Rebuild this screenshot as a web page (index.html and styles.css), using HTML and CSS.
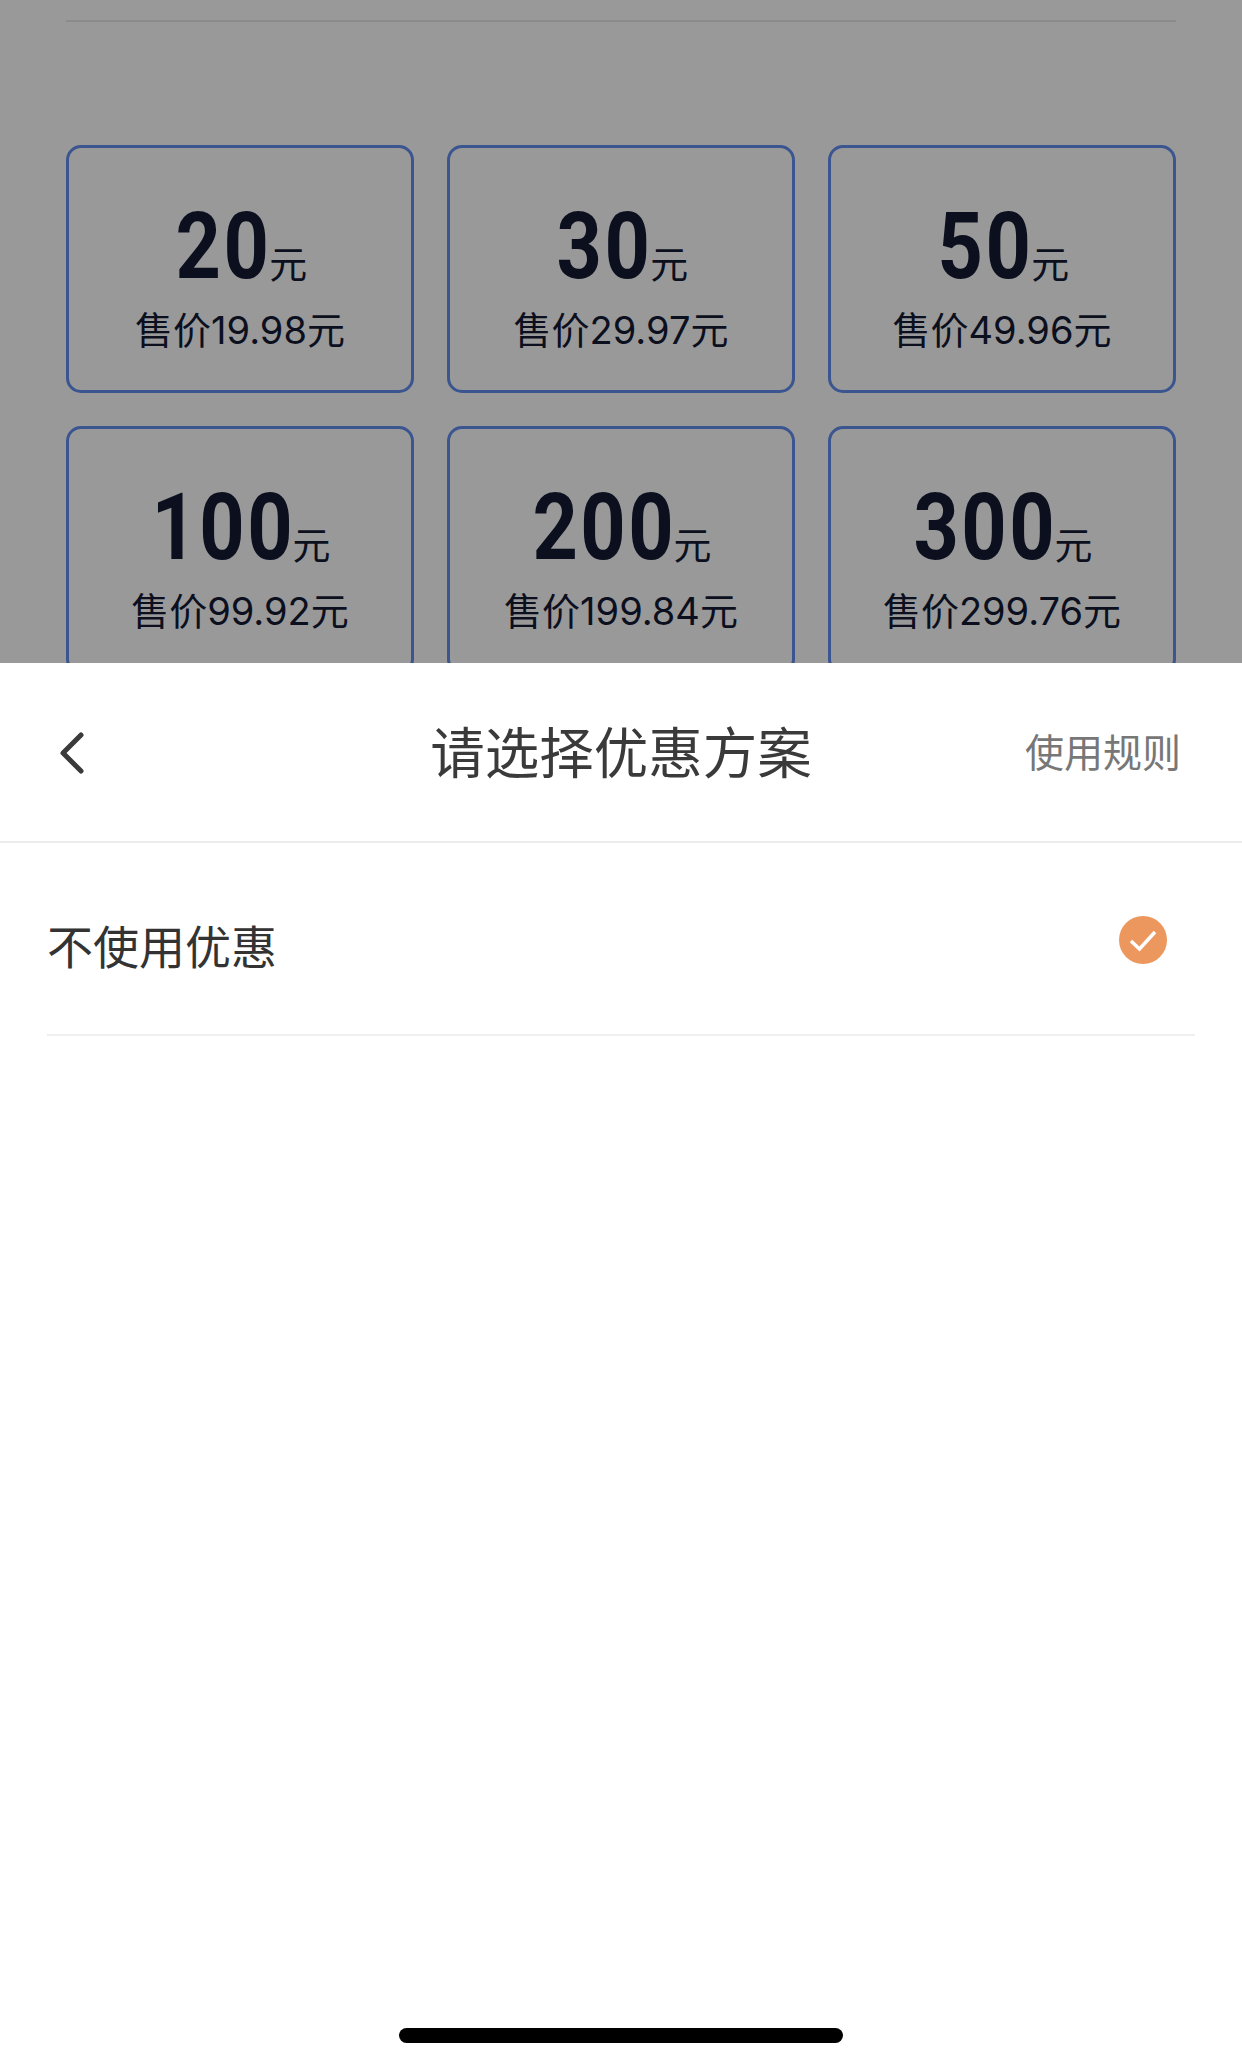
FILE: index.html
```html
<!DOCTYPE html>
<html lang="zh-CN">
<head>
  <meta charset="UTF-8">
  <meta name="viewport" content="width=device-width, initial-scale=1.0">
  <title>请选择优惠方案</title>
  <link rel="stylesheet" href="styles.css">
</head>
<body>
  <div class="dimmed">
    <div class="top-line"></div>
    <div class="card-grid">
      <div class="card">
        <div class="amount">20<span class="unit">元</span></div>
        <div class="price">售价19.98元</div>
      </div>
      <div class="card">
        <div class="amount">30<span class="unit">元</span></div>
        <div class="price">售价29.97元</div>
      </div>
      <div class="card">
        <div class="amount">50<span class="unit">元</span></div>
        <div class="price">售价49.96元</div>
      </div>
      <div class="card">
        <div class="amount">100<span class="unit">元</span></div>
        <div class="price">售价99.92元</div>
      </div>
      <div class="card">
        <div class="amount">200<span class="unit">元</span></div>
        <div class="price">售价199.84元</div>
      </div>
      <div class="card">
        <div class="amount">300<span class="unit">元</span></div>
        <div class="price">售价299.76元</div>
      </div>
    </div>
  </div>

  <div class="sheet">
    <div class="sheet-header">
      <div class="back">
        <svg width="28" height="44" viewBox="0 0 28 44">
          <path d="M24 4 L6 22 L24 40" fill="none" stroke="#3a3a3a" stroke-width="5" stroke-linecap="round" stroke-linejoin="round"/>
        </svg>
      </div>
      <div class="sheet-title">请选择优惠方案</div>
      <div class="rules">使用规则</div>
    </div>

    <div class="option">
      <div class="option-label">不使用优惠</div>
      <div class="option-check">
        <svg width="48" height="48" viewBox="0 0 48 48">
          <circle cx="24" cy="24" r="24" fill="#ec975e"/>
          <path d="M12 25 L20.5 33 L36 16" fill="none" stroke="#fff" stroke-width="3.5"/>
        </svg>
      </div>
    </div>

    <div class="home-bar"></div>
  </div>
</body>
</html>
```

FILE: styles.css
```css
html, body {
  margin: 0;
  padding: 0;
}
body {
  width: 1242px;
  height: 2066px;
  overflow: hidden;
  display: flex;
  flex-direction: column;
  background: #fff;
  font-family: "Inter", "Noto Sans CJK SC", sans-serif;
}
.dimmed {
  height: 663px;
  overflow: hidden;
  padding: 20px 66px 0;
  box-sizing: border-box;
  background: #999;
}
.top-line {
  height: 2px;
  background: #8b8b8b;
}
.card-grid {
  display: grid;
  grid-template-columns: repeat(3, 1fr);
  gap: 33px;
  margin-top: 123px;
}
.card {
  height: 248px;
  box-sizing: border-box;
  border: 3px solid #3a5590;
  border-radius: 15px;
  display: flex;
  flex-direction: column;
  align-items: center;
  color: #0b0f1e;
}
/* digits are squeezed to look like a DIN face, the unit is scaled back */
.amount {
  margin-top: 64px;
  height: 70px;
  line-height: 70px;
  font-family: "Roboto", sans-serif;
  font-weight: 700;
  font-size: 92px;
  letter-spacing: 3px;
  white-space: nowrap;
  transform: scaleX(0.86);
}
.unit {
  display: inline-block;
  font-family: "Noto Sans CJK SC", sans-serif;
  font-weight: 400;
  font-size: 38px;
  line-height: 38px;
  letter-spacing: 0;
  transform: scaleX(1.16);
}
.price {
  margin-top: 23px;
  font-size: 38px;
  line-height: 50px;
  white-space: nowrap;
}
.sheet {
  flex: 1;
  display: flex;
  flex-direction: column;
  background: #fff;
}
.sheet-header {
  height: 180px;
  box-sizing: border-box;
  border-bottom: 2px solid #ececec;
  display: grid;
  grid-template-columns: 1fr auto 1fr;
  align-items: center;
}
.back {
  padding: 1px 0 0 57px;
  display: flex;
}
.sheet-title {
  margin-bottom: 5px;
  font-family: "Noto Sans CJK SC", sans-serif;
  font-size: 54.5px;
  color: #3a3a3a;
}
.rules {
  justify-self: end;
  padding: 0 61px 5px 0;
  font-family: "Noto Sans CJK SC", sans-serif;
  font-size: 39px;
  color: #777;
}
.option {
  height: 193px;
  margin: 0 47px;
  padding-top: 11px;
  box-sizing: border-box;
  border-bottom: 2px solid #f0f0f0;
  display: flex;
  justify-content: space-between;
  align-items: center;
}
.option-label {
  font-family: "Noto Sans CJK SC", sans-serif;
  font-size: 46px;
  color: #333;
}
.option-check {
  display: flex;
  margin-right: 28px;
  margin-bottom: 9px;
}
.home-bar {
  width: 444px;
  height: 15px;
  margin: auto auto 23px;
  border-radius: 8px;
  background: #000;
}
```
